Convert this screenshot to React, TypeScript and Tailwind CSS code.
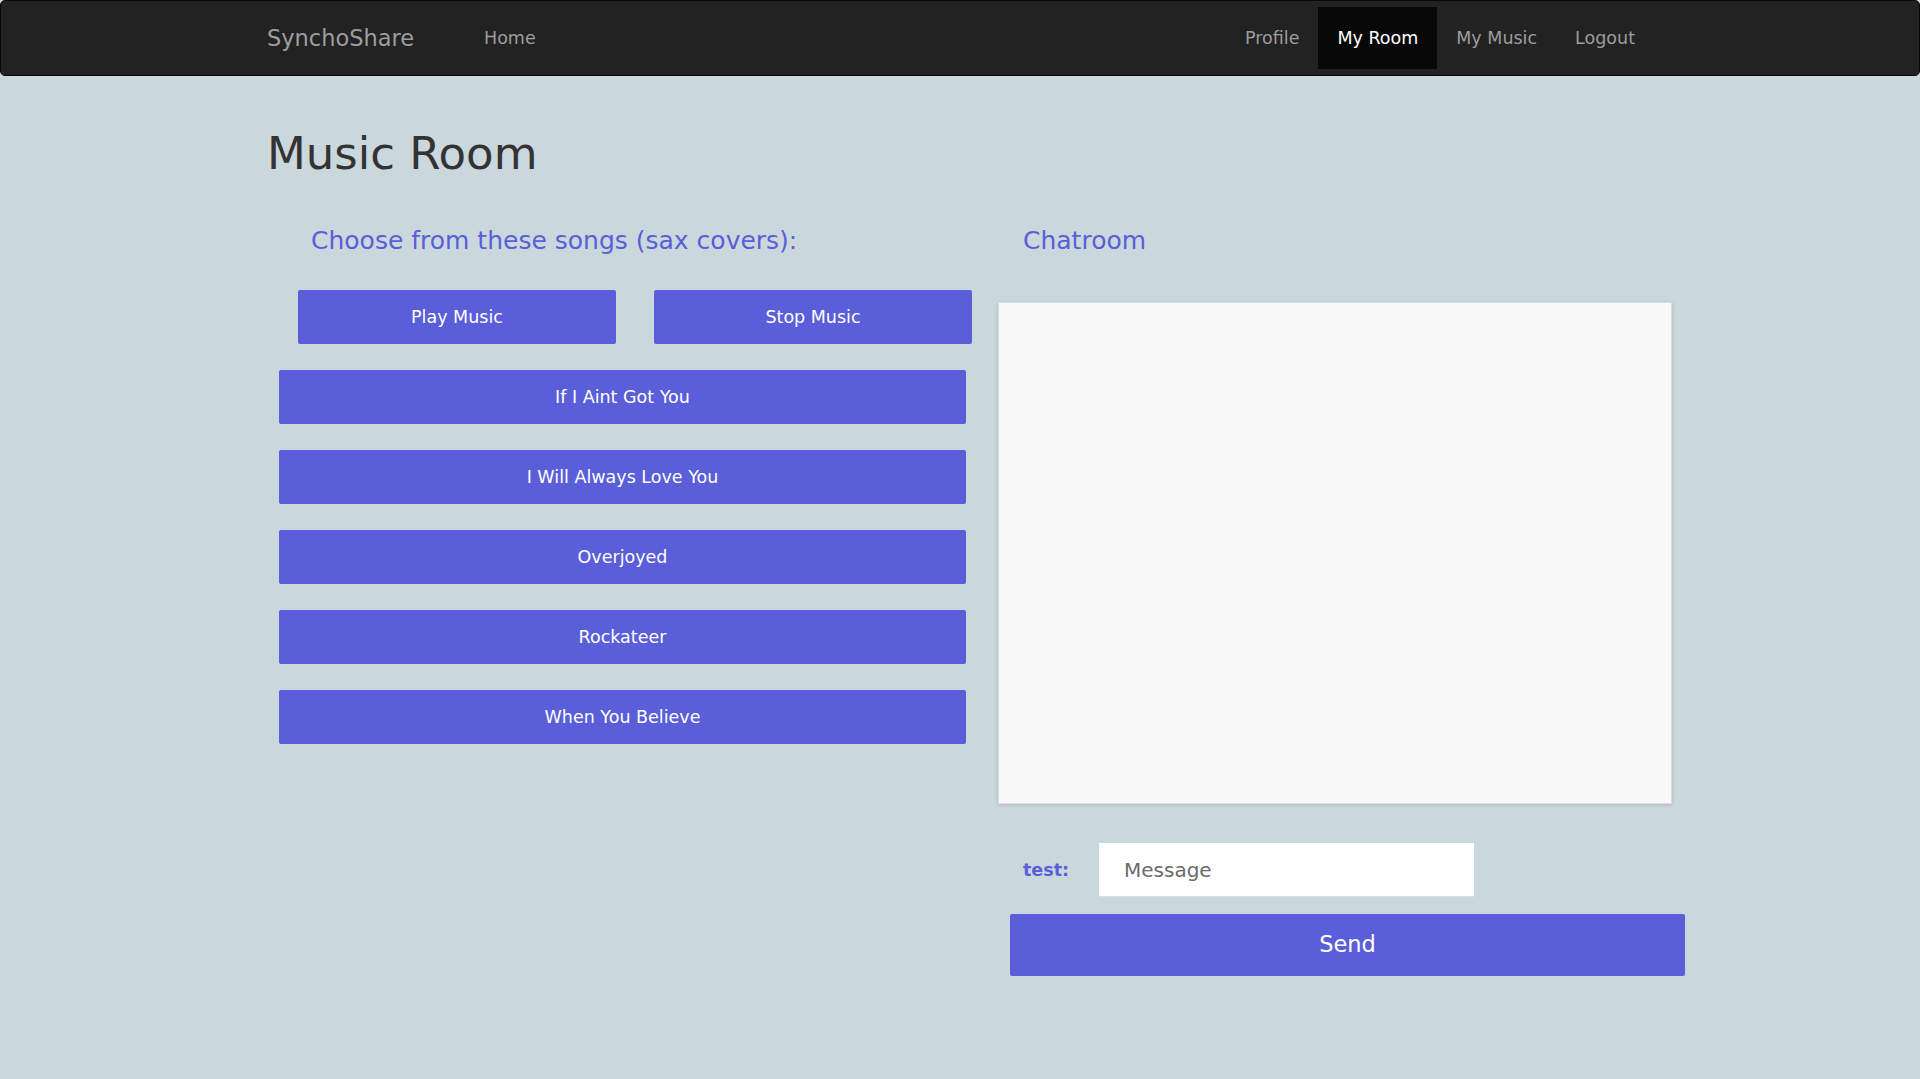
import { useState } from 'react';

const songs = ['If I Aint Got You', 'I Will Always Love You', 'Overjoyed', 'Rockateer', 'When You Believe'];

const navLinks = ['Profile', 'My Room', 'My Music', 'Logout'];

const App = () => {
  const [message, setMessage] = useState('');

  return (
    <div className="min-h-[1079px] bg-[#cad8dd] font-['DejaVu_Sans',Verdana,sans-serif]">
      {/* Navbar */}
      <nav className="flex h-[76px] items-center rounded-[5px] border border-[#080808] bg-[#222222] pl-[247px] pr-[265px]">
        <a className="w-[217px] px-[19px] text-[22.5px] leading-[62px] text-[#9d9d9d]">SynchoShare</a>
        <a className="px-[19px] text-[17.5px] leading-[62px] text-[#9d9d9d]">Home</a>
        <ul className="ml-auto flex">
          {navLinks.map((link) => (
            <li
              key={link}
              className={`px-[19px] text-[17.5px] leading-[62px] ${
                link === 'My Room' ? 'bg-[#080808] text-white' : 'text-[#9d9d9d]'
              }`}
            >
              {link}
            </li>
          ))}
        </ul>
      </nav>

      <div className="pl-[267px]">
        <h1 className="mt-[53px] text-[45px] leading-[50px] text-[#333333]">Music Room</h1>

        <div className="mt-[47px] flex">
          {/* Song list */}
          <div className="ml-[12px] w-[687px]">
            <h3 className="pl-[32px] text-[25px] leading-[30px] text-[#5a5ed8]">
              Choose from these songs (sax covers):
            </h3>
            <div className="mt-[34px] flex gap-[38px] pl-[19px]">
              <button className="h-[54px] w-[318px] shrink-0 rounded-[2px] bg-[#5a5ed8] text-[17.5px] text-white">
                Play Music
              </button>
              <button className="h-[54px] w-[318px] shrink-0 rounded-[2px] bg-[#5a5ed8] text-[17.5px] text-white">
                Stop Music
              </button>
            </div>
            <div className="mt-[26px] flex flex-col gap-[26px]">
              {songs.map((song) => (
                <button
                  key={song}
                  className="h-[54px] w-full rounded-[2px] bg-[#5a5ed8] text-[17.5px] text-white"
                >
                  {song}
                </button>
              ))}
            </div>
          </div>

          {/* Chatroom */}
          <div className="ml-[32px] w-[687px]">
            <h3 className="pl-[25px] text-[25px] leading-[30px] text-[#5a5ed8]">Chatroom</h3>
            <div className="mt-[46px] h-[502px] w-[674px] border border-[#dcdcdc] bg-[#f8f8f8] shadow-[0_1px_4px_rgba(0,0,0,0.15)]" />
            <div className="mt-[39px] flex items-center pl-[25px]">
              <label className="w-[76px] text-[17.5px] font-bold text-[#5a5ed8]">test:</label>
              <input
                value={message}
                onChange={(e) => setMessage(e.target.value)}
                placeholder="Message"
                className="h-[54px] w-[375px] border-b border-[#dddddd] bg-white px-[25px] text-[20px] text-[#333] outline-none placeholder:text-[#6b6b6b]"
              />
            </div>
            <button className="ml-[12px] mt-[17px] h-[62px] w-[675px] rounded-[2px] bg-[#5a5ed8] text-[22.5px] text-white">
              Send
            </button>
          </div>
        </div>
      </div>
    </div>
  );
};

export default App;
